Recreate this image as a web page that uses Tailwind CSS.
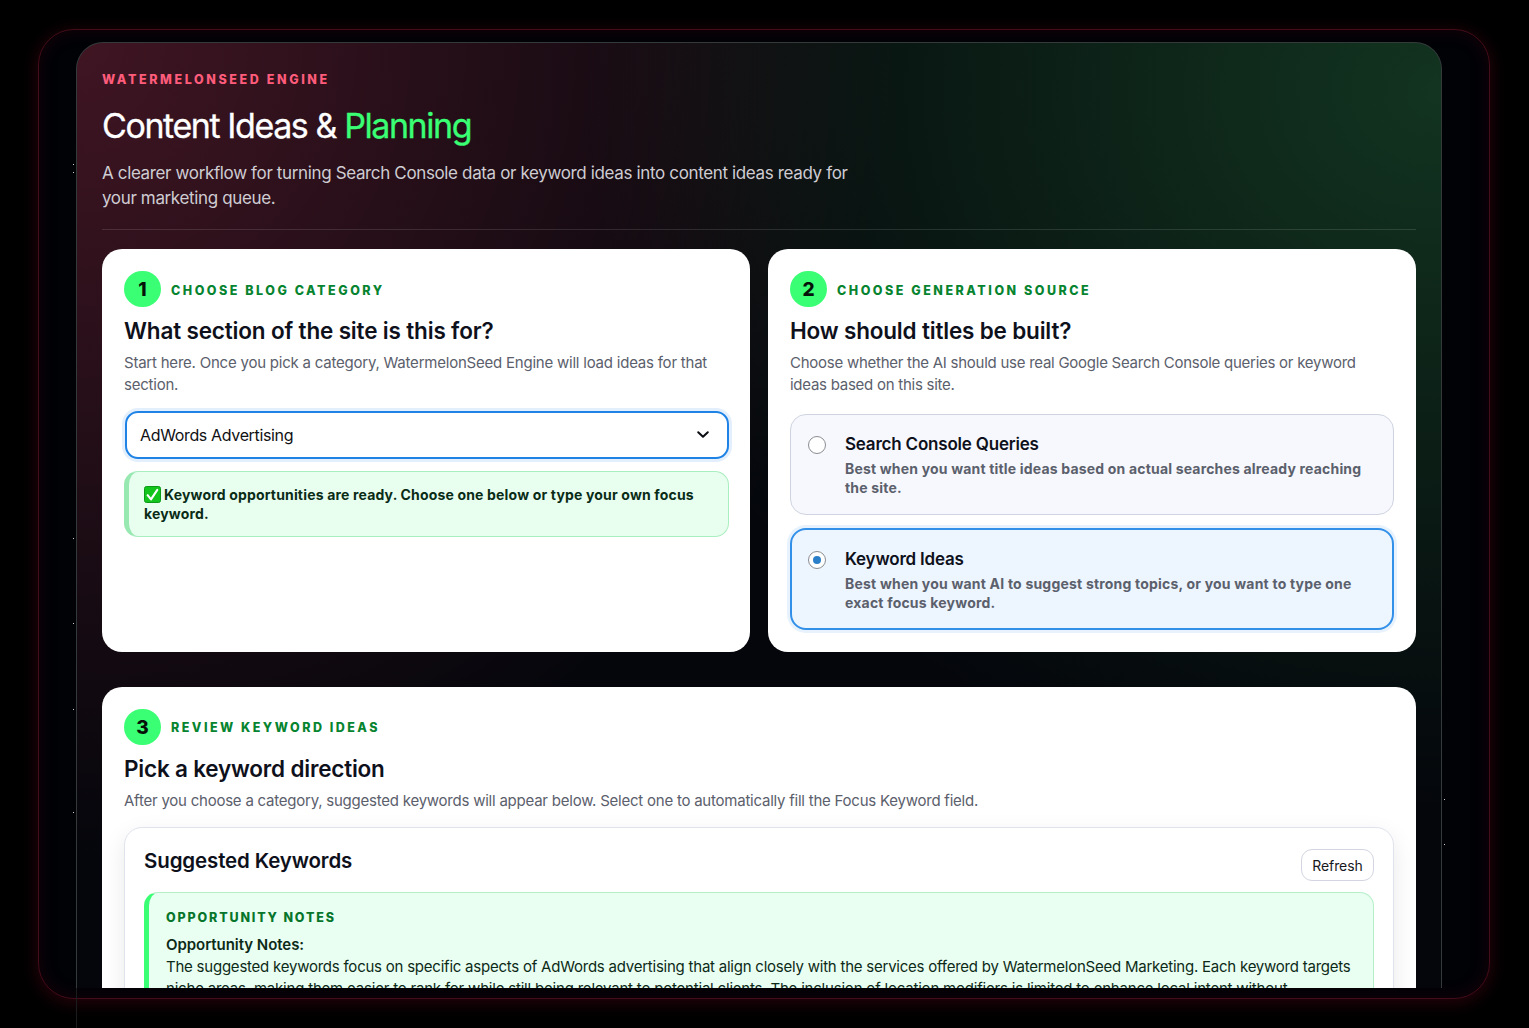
<!DOCTYPE html>
<html lang="en">
<head>
  <meta charset="UTF-8">
  <title>Content Ideas &amp; Planning</title>
  <meta name="viewport" content="width=device-width, initial-scale=1.0">
  <script src="https://cdn.jsdelivr.net/npm/@tailwindcss/browser@4"></script>
</head>
<body class="relative h-[1028px] overflow-hidden bg-black font-['Inter',sans-serif] whitespace-nowrap">
  <!-- glowing frame -->
  <div class="mx-[38px] pt-[29px]">
    <div class="h-[970px] w-[1452px] rounded-[36px] border border-[#450c19] bg-[#010206] px-[37px] pt-[12px] shadow-[0_3px_16px_2px_rgba(110,10,32,0.32),inset_0_0_16px_2px_rgba(80,5,20,0.22)]">
      <!-- main panel -->
      <main class="h-[946px] w-[1366px] overflow-hidden rounded-t-[27px] border border-b-0 border-[#343a3a] bg-[#04060b] bg-[radial-gradient(ellipse_820px_820px_at_0%_0%,rgba(255,70,110,0.24),transparent),radial-gradient(ellipse_860px_720px_at_100%_5%,rgba(72,225,110,0.21),transparent)] px-[25px] pt-[26px]">
        <header class="h-[161px] border-b border-white/12">
          <p class="h-5 pt-px text-[12.5px] leading-5 font-extrabold tracking-[2.6px] text-[#ff5c7c]">WATERMELONSEED ENGINE</p>
          <h1 class="mt-[17px] h-10 text-[34px] leading-10 font-normal tracking-[-1.42px] text-white [-webkit-text-stroke:0.3px]">Content Ideas &amp; <span class="text-[#3aff74]">Planning</span></h1>
          <p class="mt-[15px] text-[17px] leading-[25px] tracking-[-0.36px] text-[#cfccd2]">A clearer workflow for turning Search Console data or keyword ideas into content ideas ready for<br>your marketing queue.</p>
        </header>

        <div class="mt-[19px] grid grid-cols-2 gap-[18px]">
          <!-- step 1 -->
          <section class="h-[403px] rounded-[20px] bg-white px-[22px] pt-[22px]">
            <div class="flex h-9 items-center gap-[10px]">
              <span class="flex h-9 w-[37px] items-center justify-center rounded-full bg-[#3aff74] pt-[2px] text-[19px] font-extrabold text-[#06110a]">1</span>
              <span class="pt-[4px] text-[12.5px] font-extrabold tracking-[2.52px] text-[#07842f]">CHOOSE BLOG CATEGORY</span>
            </div>
            <h2 class="mt-[9px] text-[22.5px] leading-[30px] font-semibold tracking-[-0.16px] text-[#0e111b]">What section of the site is this for?</h2>
            <p class="mt-[6px] text-[15px] leading-[22px] tracking-[-0.22px] text-[#5b606c]">Start here. Once you pick a category, WatermelonSeed Engine will load ideas for that<br>section.</p>
            <div class="mt-[15px] -mr-px ml-px flex h-[48px] items-center justify-between rounded-[13px] border-2 border-[#1f83e6] bg-white pr-[17px] pl-[13px] shadow-[0_0_0_3px_#e3effc]">
              <span class="text-[16px] tracking-[-0.35px] text-[#101114]">AdWords Advertising</span>
              <svg class="h-3 w-[14px]" viewBox="0 0 14 12" fill="none" stroke="#0b0d12" stroke-width="2" stroke-linecap="round" stroke-linejoin="round"><path d="M2.2 3.2 7 7.8 11.8 3.2"/></svg>
            </div>
            <div class="mt-[12px] -mr-px h-[66px] rounded-[14px] border border-l-[5px] border-[#a9eebf] border-l-[#97e8b1] bg-[#e8fff0] pt-[13px] pl-[15px] text-[14px] leading-[19px] font-bold tracking-[0.17px] text-[#0a2c17]">
              <svg class="mr-[3px] inline h-[17px] w-[17px] align-[-3px]" viewBox="0 0 17 17"><rect x=".5" y=".5" width="16" height="16" rx="2" fill="#12c41c" stroke="#0b9a17"/><path d="M3.6 9.2 7 13.4 13.3 3.8" fill="none" stroke="#fff" stroke-width="2.1" stroke-linecap="round" stroke-linejoin="round"/></svg>Keyword opportunities are ready. Choose one below or type your own focus<br>keyword.
            </div>
          </section>

          <!-- step 2 -->
          <section class="h-[403px] rounded-[20px] bg-white px-[22px] pt-[22px]">
            <div class="flex h-9 items-center gap-[10px]">
              <span class="flex h-9 w-[37px] items-center justify-center rounded-full bg-[#3aff74] pt-[2px] text-[19px] font-extrabold text-[#06110a]">2</span>
              <span class="pt-[4px] text-[12.5px] font-extrabold tracking-[2.52px] text-[#07842f]">CHOOSE GENERATION SOURCE</span>
            </div>
            <h2 class="mt-[9px] text-[22.5px] leading-[30px] font-semibold tracking-[-0.18px] text-[#0e111b]">How should titles be built?</h2>
            <p class="mt-[6px] text-[15px] leading-[22px] tracking-[-0.26px] text-[#5b606c]">Choose whether the AI should use real Google Search Console queries or keyword<br>ideas based on this site.</p>
            <div class="mt-[18px] flex h-[101px] rounded-[16px] border border-[#cfd4e0] bg-[#f7f8fd] pt-[18px] pl-[17px]">
              <span class="mt-[3px] h-[18px] w-[18px] rounded-full border border-[#8b8d92] bg-white"></span>
              <div class="ml-[19px]">
                <h3 class="text-[17px] leading-[22px] font-semibold tracking-[-0.2px] text-[#0e111b]">Search Console Queries</h3>
                <p class="mt-[4px] text-[14px] leading-[19px] font-bold tracking-[0.18px] text-[#5b606c]">Best when you want title ideas based on actual searches already reaching<br>the site.</p>
              </div>
            </div>
            <div class="mt-[13px] flex h-[102px] rounded-[16px] border-2 border-[#3390e8] bg-[#edf5ff] pt-[18px] pl-[16px] shadow-[0_0_0_3px_#e8f2fd]">
              <span class="mt-[3px] flex h-[18px] w-[18px] items-center justify-center rounded-full border border-[#8b8d92] bg-white"><span class="h-2 w-2 rounded-full bg-[#2b7fc9]"></span></span>
              <div class="ml-[19px]">
                <h3 class="text-[17px] leading-[22px] font-semibold tracking-[-0.2px] text-[#0e111b]">Keyword Ideas</h3>
                <p class="mt-[4px] text-[14px] leading-[19px] font-bold tracking-[0.2px] text-[#5b606c]">Best when you want AI to suggest strong topics, or you want to type one<br>exact focus keyword.</p>
              </div>
            </div>
          </section>
        </div>

        <!-- step 3 -->
        <section class="mt-[35px] h-[420px] rounded-[20px] bg-white px-[22px] pt-[22px]">
          <div class="flex h-9 items-center gap-[10px]">
            <span class="flex h-9 w-[37px] items-center justify-center rounded-full bg-[#3aff74] pt-[2px] text-[19px] font-extrabold text-[#06110a]">3</span>
            <span class="pt-[3px] text-[12.5px] font-extrabold tracking-[2.48px] text-[#07842f]">REVIEW KEYWORD IDEAS</span>
          </div>
          <h2 class="mt-[9px] text-[22.5px] leading-[30px] font-semibold tracking-[-0.2px] text-[#0e111b]">Pick a keyword direction</h2>
          <p class="mt-[6px] text-[15px] leading-[22px] tracking-[-0.23px] text-[#5b606c]">After you choose a category, suggested keywords will appear below. Select one to automatically fill the Focus Keyword field.</p>
          <div class="mt-[15px] h-[400px] rounded-[18px] border border-[#dfe3ec] bg-white px-[19px] pt-[19px] shadow-[0_8px_24px_rgba(15,20,40,0.09)]">
            <div class="flex justify-between">
              <h3 class="text-[20.5px] leading-[28px] font-semibold tracking-[-0.13px] text-[#0e111b]">Suggested Keywords</h3>
              <button class="mt-[2px] h-[32px] w-[73px] rounded-[11px] border border-[#d3d6e2] bg-white text-[14px] tracking-[-0.1px] text-[#16181d]">Refresh</button>
            </div>
            <div class="mt-[11px] h-[300px] rounded-[14px] border border-l-[5px] border-[#b5efc8] border-l-[#3aff74] bg-[#e9fff2] pt-[15px] pl-[17px] text-[#0d2a18]">
              <p class="text-[12.5px] leading-5 font-extrabold tracking-[1.85px] text-[#07752b]">OPPORTUNITY NOTES</p>
              <p class="mt-[6px] text-[15px] leading-[22px] font-semibold tracking-[-0.05px]">Opportunity Notes:</p>
              <p class="text-[15px] leading-[22px] tracking-[-0.23px]">The suggested keywords focus on specific aspects of AdWords advertising that align closely with the services offered by WatermelonSeed Marketing. Each keyword targets<br><span class="tracking-[-0.2px]">niche areas, making them easier to rank for while still being relevant to potential clients. The inclusion of location modifiers is limited to enhance local intent without</span></p>
            </div>
          </div>
        </section>
      </main>
    </div>
  </div>

  <!-- edge line that runs on below the panel, and small specks beside it -->
  <i class="absolute top-[988px] left-[76px] h-10 w-px bg-[#1a1c1e]"></i>
  <i class="absolute top-[164px] left-[73px] h-px w-px bg-white/80"></i>
  <i class="absolute top-[172px] left-[73px] h-px w-px bg-white/80"></i>
  <i class="absolute top-[538px] left-[73px] h-px w-px bg-white/80"></i>
  <i class="absolute top-[623px] left-[73px] h-px w-px bg-white/80"></i>
  <i class="absolute top-[709px] left-[73px] h-px w-px bg-white/80"></i>
  <i class="absolute top-[812px] left-[73px] h-px w-px bg-white/80"></i>
  <i class="absolute top-[799px] left-[1444px] h-px w-px bg-white/80"></i>
  <i class="absolute top-[844px] left-[1444px] h-px w-px bg-white/80"></i>
</body>
</html>
